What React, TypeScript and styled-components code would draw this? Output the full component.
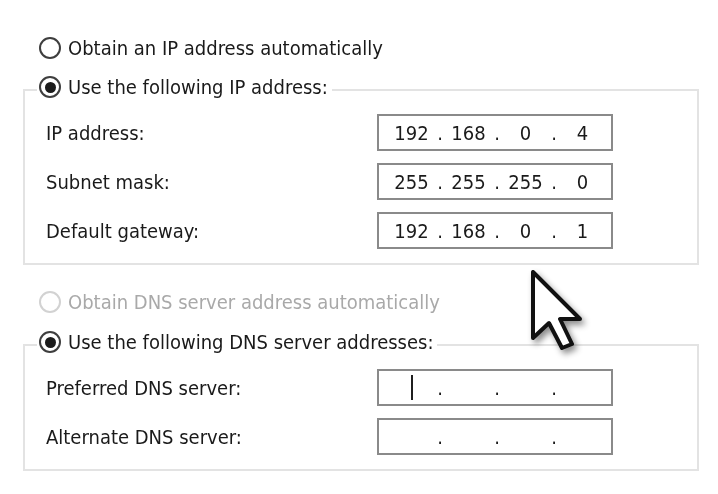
import React from "react";
import styled, { createGlobalStyle } from "styled-components";

const GlobalStyle = createGlobalStyle`
  html, body { margin: 0; padding: 0; background: #ffffff; }
  body {
    font-family: "DejaVu Sans Condensed", "DejaVu Sans", sans-serif;
    font-size: 20px;
    color: #1a1a1a;
  }
  * { box-sizing: border-box; }
`;

const Page = styled.div`
  position: relative;
  width: 718px;
  height: 494px;
  overflow: hidden;
  padding: 35px 19px 0 23px;
  filter: blur(0.45px);
`;

const RadioRow = styled.div<{ $indent?: boolean; $disabled?: boolean; $mt?: number }>`
  display: flex;
  align-items: center;
  gap: 7px;
  height: 26px;
  margin-left: ${(p) => (p.$indent ? "16px" : "0")};
  margin-top: ${(p) => p.$mt ?? 0}px;
  color: ${(p) => (p.$disabled ? "#a9a9a9" : "#1a1a1a")};
  white-space: nowrap;
`;

const RadioCircle = styled.span<{ $checked?: boolean; $disabled?: boolean }>`
  flex: none;
  width: 22px;
  height: 22px;
  border-radius: 50%;
  border: 2px solid ${(p) => (p.$disabled ? "#d2d2d2" : "#3e3e3e")};
  background: #ffffff;
  display: flex;
  align-items: center;
  justify-content: center;
  &::after {
    content: "";
    display: ${(p) => (p.$checked ? "block" : "none")};
    width: 11px;
    height: 11px;
    border-radius: 50%;
    background: #1b1b1b;
  }
`;

const Group = styled.fieldset<{ $mt: number }>`
  margin: ${(p) => p.$mt}px 0 0 0;
  padding: 0;
  width: 676px;
  border: 2px solid #e3e3e3;
  min-width: 0;
`;

const Legend = styled.legend`
  margin-left: 12px;
  padding: 0 4px 6px 2px;
  height: 32px;
`;

const Rows = styled.div`
  display: grid;
  grid-template-columns: 331px 236px;
  grid-auto-rows: 37px;
  row-gap: 12px;
  align-items: center;
  padding: 8px 0 14px 21px;
`;

const Label = styled.span`
  white-space: nowrap;
`;

const IpBox = styled.div`
  display: flex;
  align-items: center;
  width: 236px;
  height: 37px;
  border: 2px solid #8a8a8a;
  padding-left: 5px;
  background: #ffffff;
`;

const Field = styled.span`
  width: 55px;
  height: 100%;
  display: flex;
  align-items: center;
  justify-content: center;
`;

const Dot = styled.span`
  width: 2px;
  display: flex;
  justify-content: center;
  overflow: visible;
`;

const Caret = styled.span`
  width: 2px;
  height: 25px;
  background: #1f1f1f;
`;

const Pointer = styled.svg`
  position: absolute;
  left: 527px;
  top: 266px;
  overflow: visible;
  filter: drop-shadow(3px 4px 3px rgba(0, 0, 0, 0.45));
`;

type IpProps = { parts: string[]; caret?: boolean };

function IpInput({ parts, caret }: IpProps) {
  return (
    <IpBox>
      {parts.map((p, i) => (
        <React.Fragment key={i}>
          <Field>{caret && i === 0 ? <Caret /> : p}</Field>
          {i < 3 && <Dot>.</Dot>}
        </React.Fragment>
      ))}
    </IpBox>
  );
}

export default function App() {
  return (
    <>
      <GlobalStyle />
      <Page>
        <RadioRow $indent>
          <RadioCircle />
          <span>Obtain an IP address automatically</span>
        </RadioRow>

        <Group $mt={13}>
          <Legend>
            <RadioRow>
              <RadioCircle $checked />
              <span>Use the following IP address:</span>
            </RadioRow>
          </Legend>
          <Rows>
            <Label>IP address:</Label>
            <IpInput parts={["192", "168", "0", "4"]} />
            <Label>Subnet mask:</Label>
            <IpInput parts={["255", "255", "255", "0"]} />
            <Label>Default gateway:</Label>
            <IpInput parts={["192", "168", "0", "1"]} />
          </Rows>
        </Group>

        <RadioRow $indent $disabled $mt={24}>
          <RadioCircle $disabled />
          <span>Obtain DNS server address automatically</span>
        </RadioRow>

        <Group $mt={14}>
          <Legend>
            <RadioRow>
              <RadioCircle $checked />
              <span>Use the following DNS server addresses:</span>
            </RadioRow>
          </Legend>
          <Rows>
            <Label>Preferred DNS server:</Label>
            <IpInput parts={["", "", "", ""]} caret />
            <Label>Alternate DNS server:</Label>
            <IpInput parts={["", "", "", ""]} />
          </Rows>
        </Group>

        <Pointer width="70" height="95" viewBox="0 0 70 95">
          <path
            d="M6 6 L6 72 L22 57 L35 82 L45 78 L33 53 L53 53 Z"
            fill="#ffffff"
            stroke="#111111"
            strokeWidth="4"
            strokeLinejoin="round"
          />
        </Pointer>
      </Page>
    </>
  );
}
